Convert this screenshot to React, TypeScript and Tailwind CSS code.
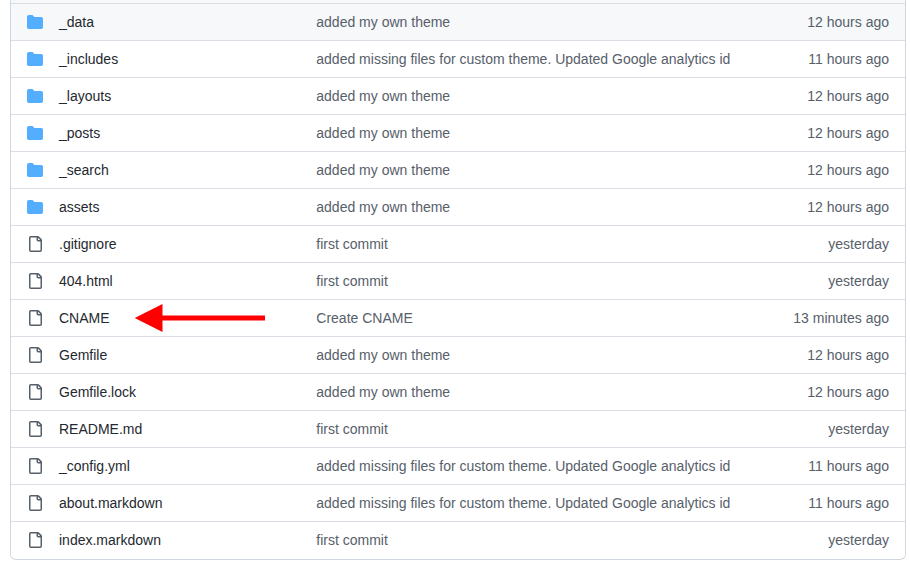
type Entry = { name: string; message: string; age: string; folder?: boolean };

const THEME = 'added my own theme';
const MISSING = 'added missing files for custom theme. Updated Google analytics id';

const entries: Entry[] = [
  { name: '_data', message: THEME, age: '12 hours ago', folder: true },
  { name: '_includes', message: MISSING, age: '11 hours ago', folder: true },
  { name: '_layouts', message: THEME, age: '12 hours ago', folder: true },
  { name: '_posts', message: THEME, age: '12 hours ago', folder: true },
  { name: '_search', message: THEME, age: '12 hours ago', folder: true },
  { name: 'assets', message: THEME, age: '12 hours ago', folder: true },
  { name: '.gitignore', message: 'first commit', age: 'yesterday' },
  { name: '404.html', message: 'first commit', age: 'yesterday' },
  { name: 'CNAME', message: 'Create CNAME', age: '13 minutes ago' },
  { name: 'Gemfile', message: THEME, age: '12 hours ago' },
  { name: 'Gemfile.lock', message: THEME, age: '12 hours ago' },
  { name: 'README.md', message: 'first commit', age: 'yesterday' },
  { name: '_config.yml', message: MISSING, age: '11 hours ago' },
  { name: 'about.markdown', message: MISSING, age: '11 hours ago' },
  { name: 'index.markdown', message: 'first commit', age: 'yesterday' },
];

function FolderIcon() {
  return (
    <svg className="size-4 shrink-0 fill-[#54aeff]" viewBox="0 0 16 16" aria-hidden="true">
      <path d="M1.75 1A1.75 1.75 0 0 0 0 2.75v10.5C0 14.216.784 15 1.75 15h12.5A1.75 1.75 0 0 0 16 13.25v-8.5A1.75 1.75 0 0 0 14.25 3H7.5a.25.25 0 0 1-.2-.1l-.9-1.2C6.07 1.26 5.55 1 5 1H1.75Z" />
    </svg>
  );
}

function FileIcon() {
  return (
    <svg className="size-4 shrink-0 fill-[#57606a]" viewBox="0 0 16 16" aria-hidden="true">
      <path
        fillRule="evenodd"
        d="M3.75 1.5a.25.25 0 0 0-.25.25v12.5c0 .138.112.25.25.25h9.5a.25.25 0 0 0 .25-.25V5.5h-2.25A1.75 1.75 0 0 1 9.5 3.75V1.5H3.75Zm7.25.3v1.95c0 .138.112.25.25.25h1.95L11 1.8ZM2 1.75C2 .784 2.784 0 3.75 0h7.086c.464 0 .909.184 1.237.513l2.414 2.414c.329.328.513.773.513 1.237V14.25A1.75 1.75 0 0 1 13.25 16h-9.5A1.75 1.75 0 0 1 2 14.25V1.75Z"
      />
    </svg>
  );
}

function Arrow() {
  return (
    <svg className="absolute top-[3px] left-[123px] h-[30px] w-[132px] fill-[#ff0000]" viewBox="0 0 132 30" aria-hidden="true">
      <path d="M0.7 15 28.5 1v11.5H131v5H28.5V29Z" />
    </svg>
  );
}

function Row({ entry, first }: { entry: Entry; first: boolean }) {
  return (
    <div
      className={`relative flex h-[37px] items-center border-t border-[#d8dee4] px-4 text-sm leading-5 ${first ? 'bg-[#f6f8fa]' : 'bg-white'}`}
    >
      {entry.folder ? <FolderIcon /> : <FileIcon />}
      <div className="ml-4 w-[257.3px] shrink-0 text-[#24292f]">{entry.name}</div>
      <div className="grow text-[#57606a]">{entry.message}</div>
      <div className="text-right text-[#57606a]">{entry.age}</div>
      {entry.name === 'CNAME' && <Arrow />}
    </div>
  );
}

export default function App() {
  return (
    <div className="h-[564px] w-[910px] overflow-hidden bg-white pl-2.5 font-['Liberation_Sans',Arial,sans-serif]">
      <div className="h-[560px] w-[896px] overflow-hidden rounded-b-md border-x border-b border-[#d0d7de] bg-white">
        <div className="h-[3px] bg-[#f6f8fa]" />
        {entries.map((entry, i) => (
          <Row key={entry.name} entry={entry} first={i === 0} />
        ))}
      </div>
    </div>
  );
}
